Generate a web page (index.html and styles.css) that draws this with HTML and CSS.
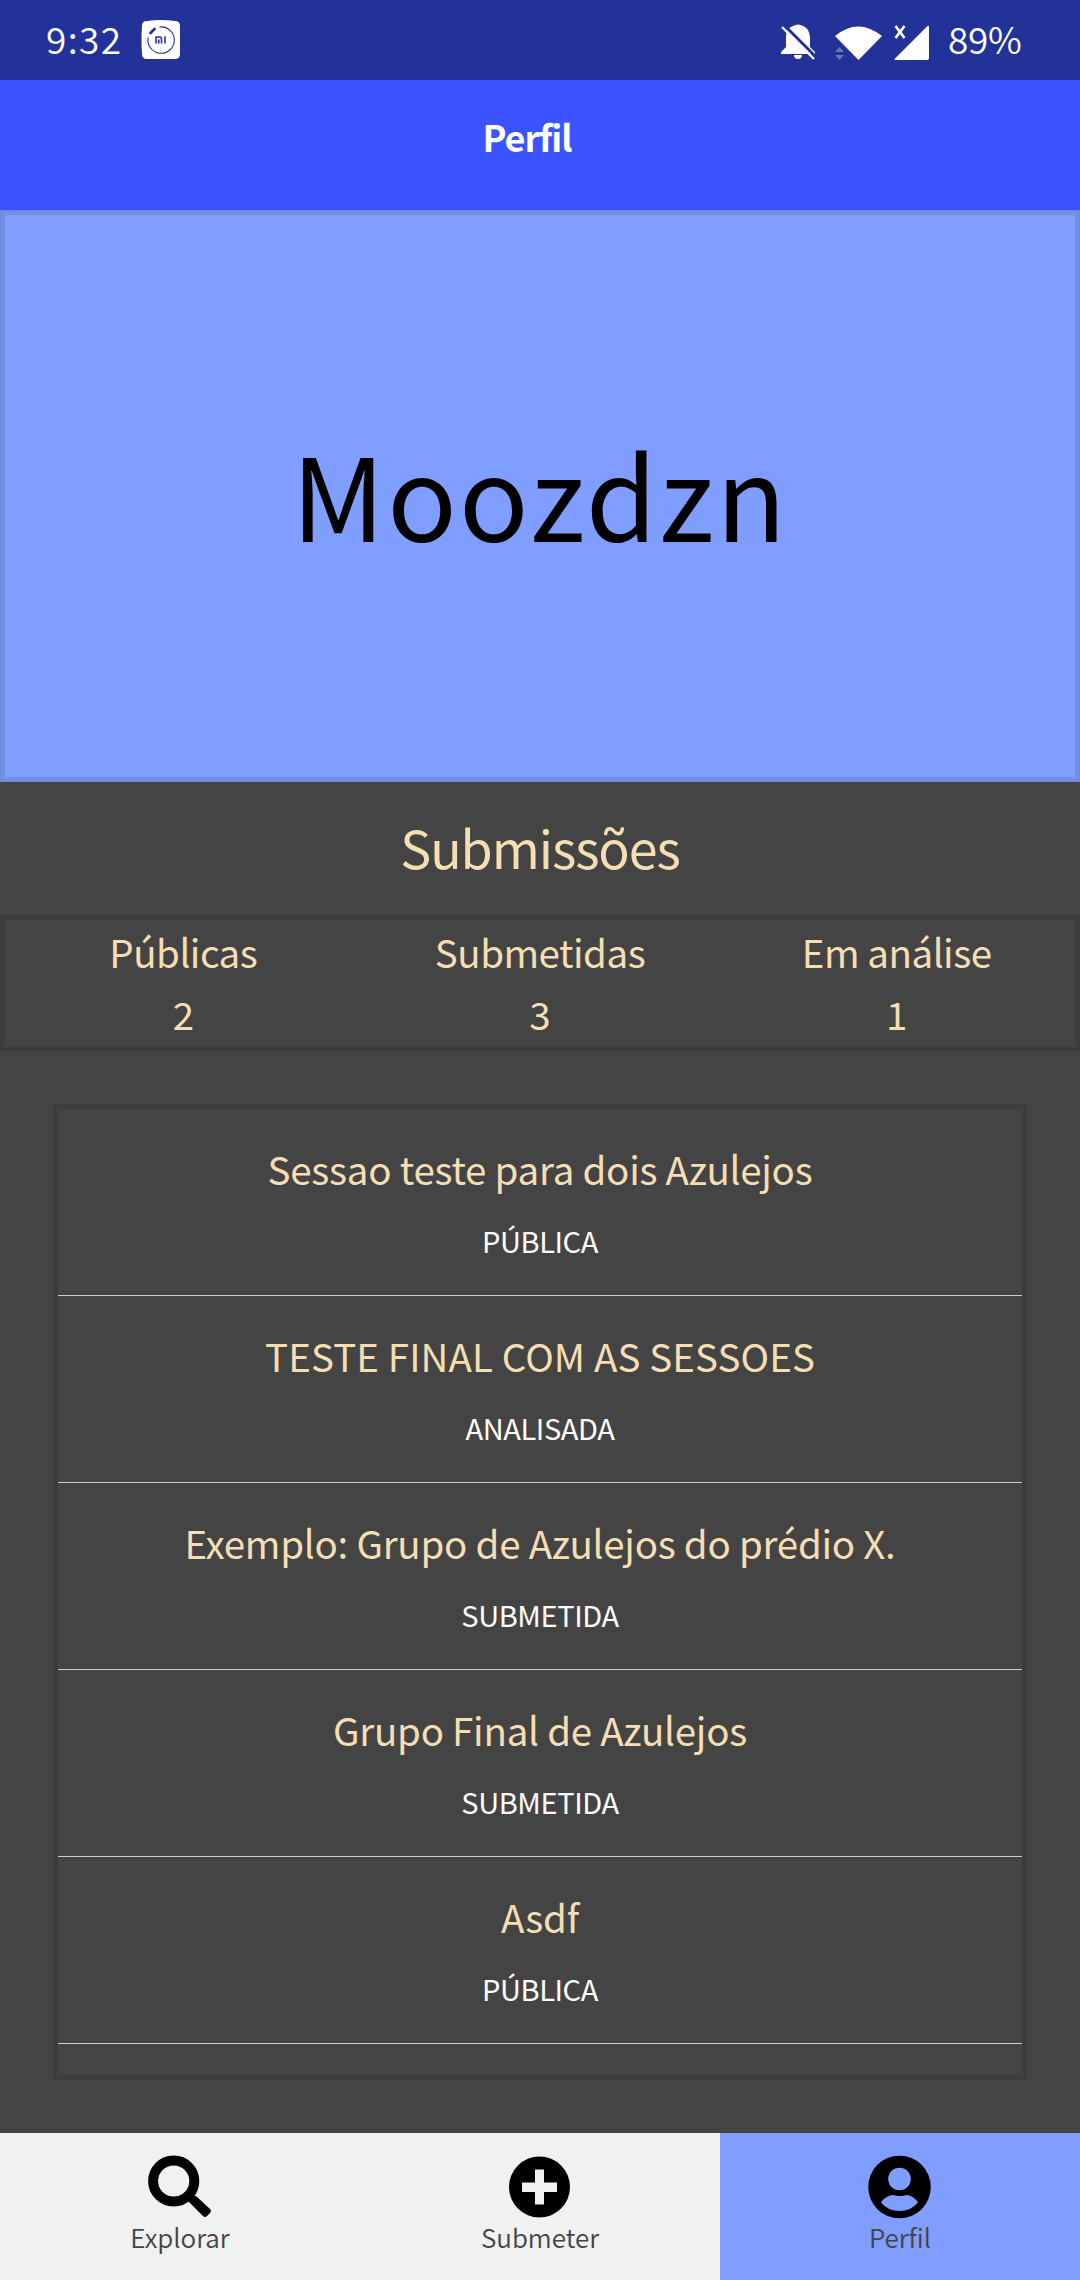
FILE: index.html
```html
<!DOCTYPE html>
<html lang="pt">
<head>
<meta charset="utf-8">
<title>Perfil</title>
<link rel="stylesheet" href="styles.css">
</head>
<body>
<div class="screen">
  <div class="status">
    <span class="clock">9:32</span>
    <svg class="mi" width="40" height="40" viewBox="0 0 40 40">
      <path d="M6 1Q20-1 34 1Q39 1 39 6V34Q39 39 34 39H6Q1 39 1 34Q0 20 1 6Q1 1 6 1Z" fill="#fff"/>
      <path d="M18.500 7A13.200 13.200 0 1 1 7.200 17.500" fill="none" stroke="#223298" stroke-width="1.100"/>
      <path d="M9.500 13L13.500 9" stroke="#223298" stroke-width="2.800" stroke-linecap="round"/>
      <path d="M15 23.500V17H18.500Q20.500 17 20.500 19V23.500M17.800 19.500V23.500M24 16.300V23.500" fill="none" stroke="#223298" stroke-width="1.600"/>
    </svg>
    <svg class="indicators" width="150" height="38" viewBox="0 0 150 38">
      <path fill="#fff" d="M1 32V30L6 25V15Q6 6 13 4Q18 1 23 4Q29 6 30 15V25L35 30V32ZM14 33H22Q22 37 18 37Q14 37 14 33Z"/>
      <path d="M4 3L36 35" stroke="#223298" stroke-width="3"/>
      <path d="M2 5L34 37" stroke="#fff" stroke-width="2.300"/>
      <path d="M55 14Q78-5 102 14L78.500 38Z" fill="#fff"/>
      <path d="M55 30L59.500 25L64 30ZM55 33L59.500 38L64 33Z" fill="#6a75b9"/>
      <path d="M147.500 4Q149 3 149 5V36Q149 38 147 38H115Q114 38 115 36.500Z" fill="#fff"/>
      <path d="M115.500 4L124.500 16M124.500 4L115.500 16" stroke="#fff" stroke-width="2.600"/>
    </svg>
    <span class="battery">89%</span>
  </div>
  <header class="header">Perfil</header>
  <section class="hero"><span class="name">Moozdzn</span></section>
  <h1 class="heading">Submissões</h1>
  <section class="stats">
    <div class="stat"><span class="label">Públicas</span><span>2</span></div>
    <div class="stat"><span class="label">Submetidas</span><span>3</span></div>
    <div class="stat"><span class="label">Em análise</span><span>1</span></div>
  </section>
  <section class="list">
    <div class="row"><span class="title">Sessao teste para dois Azulejos</span><span class="state">PÚBLICA</span></div>
    <div class="row"><span class="title caps">TESTE FINAL COM AS SESSOES</span><span class="state">ANALISADA</span></div>
    <div class="row"><span class="title">Exemplo: Grupo de Azulejos do prédio X.</span><span class="state">SUBMETIDA</span></div>
    <div class="row"><span class="title">Grupo Final de Azulejos</span><span class="state">SUBMETIDA</span></div>
    <div class="row"><span class="title">Asdf</span><span class="state">PÚBLICA</span></div>
  </section>
  <nav class="tabs">
    <div class="tab">
      <svg width="66" height="66" viewBox="0 0 66 66"><circle cx="26.700" cy="27" r="20.600" fill="none" stroke="#000" stroke-width="10"/><path d="M42 43L42 48L56 62Q58 64 60 62L63 59Q65 57 63 55L49 42Q45 42 42 43Z"/></svg>
      <span>Explorar</span>
    </div>
    <div class="tab">
      <svg width="66" height="66" viewBox="0 0 66 66"><path fill-rule="evenodd" d="M32.500 2.500a30.500 30.500 0 1 1 0 61a30.500 30.500 0 1 1 0-61ZM28 15.500V28.500H15V38H28V50.500H37V38H50V28.500H37V15.500Z"/></svg>
      <span>Submeter</span>
    </div>
    <div class="tab active">
      <svg width="66" height="66" viewBox="0 0 66 66"><circle cx="32.500" cy="33" r="31.300"/><g fill="#809eff"><circle cx="32.500" cy="25" r="11.300"/><path d="M14 48.500Q18 42 26 41Q32.500 43 40 41Q47 42 51 48.500Q44 57 32.500 57Q21 57 14 48.500Z"/></g></svg>
      <span>Perfil</span>
    </div>
  </nav>
</div>
</body>
</html>
```
FILE: styles.css
```css
* { box-sizing: border-box; }
body { margin: 0; font-family: "Noto Sans CJK SC", "Noto Sans", sans-serif; }
.screen { width: 1080px; height: 2280px; display: flex; flex-direction: column; background: #444; overflow: hidden; }
span { white-space: nowrap; }
svg { display: block; flex: none; }

.status { height: 80px; flex: none; display: flex; align-items: center; background: #223298; color: #fff; padding: 0 59px 0 46px; font-size: 37px; font-weight: 350; line-height: 76px; }
.clock { width: 95px; letter-spacing: 1.4px; margin-top: -4px; }
.indicators { margin-left: auto; margin-right: 18px; margin-top: 1px; }
.battery { width: 73px; margin-top: -4px; letter-spacing: -0.3px; }

.header { height: 130px; flex: none; background: #3b54ff; color: #fff; text-align: center; font-size: 36px; font-weight: 700; letter-spacing: -1.1px; line-height: 112px; padding-right: 26px; }
.hero { height: 572px; flex: none; display: flex; justify-content: center; background: #809eff; border: 5px solid #738ee5; outline: 1px solid #7088da; outline-offset: -1px; }
.name { font-size: 115px; line-height: 555px; letter-spacing: 2.2px; }
.heading { height: 133px; flex: none; margin: 0; color: #f5deb3; text-align: center; font-size: 52px; font-weight: 400; letter-spacing: -1.1px; line-height: 129px; }

.stats { height: 136px; flex: none; display: flex; border: 5px solid #3d3d3d; color: #f5deb3; font-size: 38.5px; }
.stat { flex: 1; display: flex; flex-direction: column; align-items: center; line-height: 62px; }
.label { letter-spacing: -0.5px; }

.list { height: 976px; flex: none; margin: 53px 53px 0; border: 5px solid #3d3d3d; }
.row { height: 187px; display: flex; flex-direction: column; align-items: center; border-bottom: 1px solid #ccc; padding-top: 26px; }
.title { color: #f5deb3; font-size: 38.5px; letter-spacing: -0.25px; line-height: 67px; }
.caps { letter-spacing: 0.1px; }
.state { color: #fff; font-size: 29px; letter-spacing: -0.4px; line-height: 77px; }

.tabs { height: 147px; flex: none; margin-top: auto; display: flex; background: #f1f1f1; }
.tab { flex: 1; display: flex; flex-direction: column; align-items: center; padding-top: 21px; color: #444; font-size: 26px; font-weight: 350; line-height: 34px; }
.active { background: #809eff; }
```
